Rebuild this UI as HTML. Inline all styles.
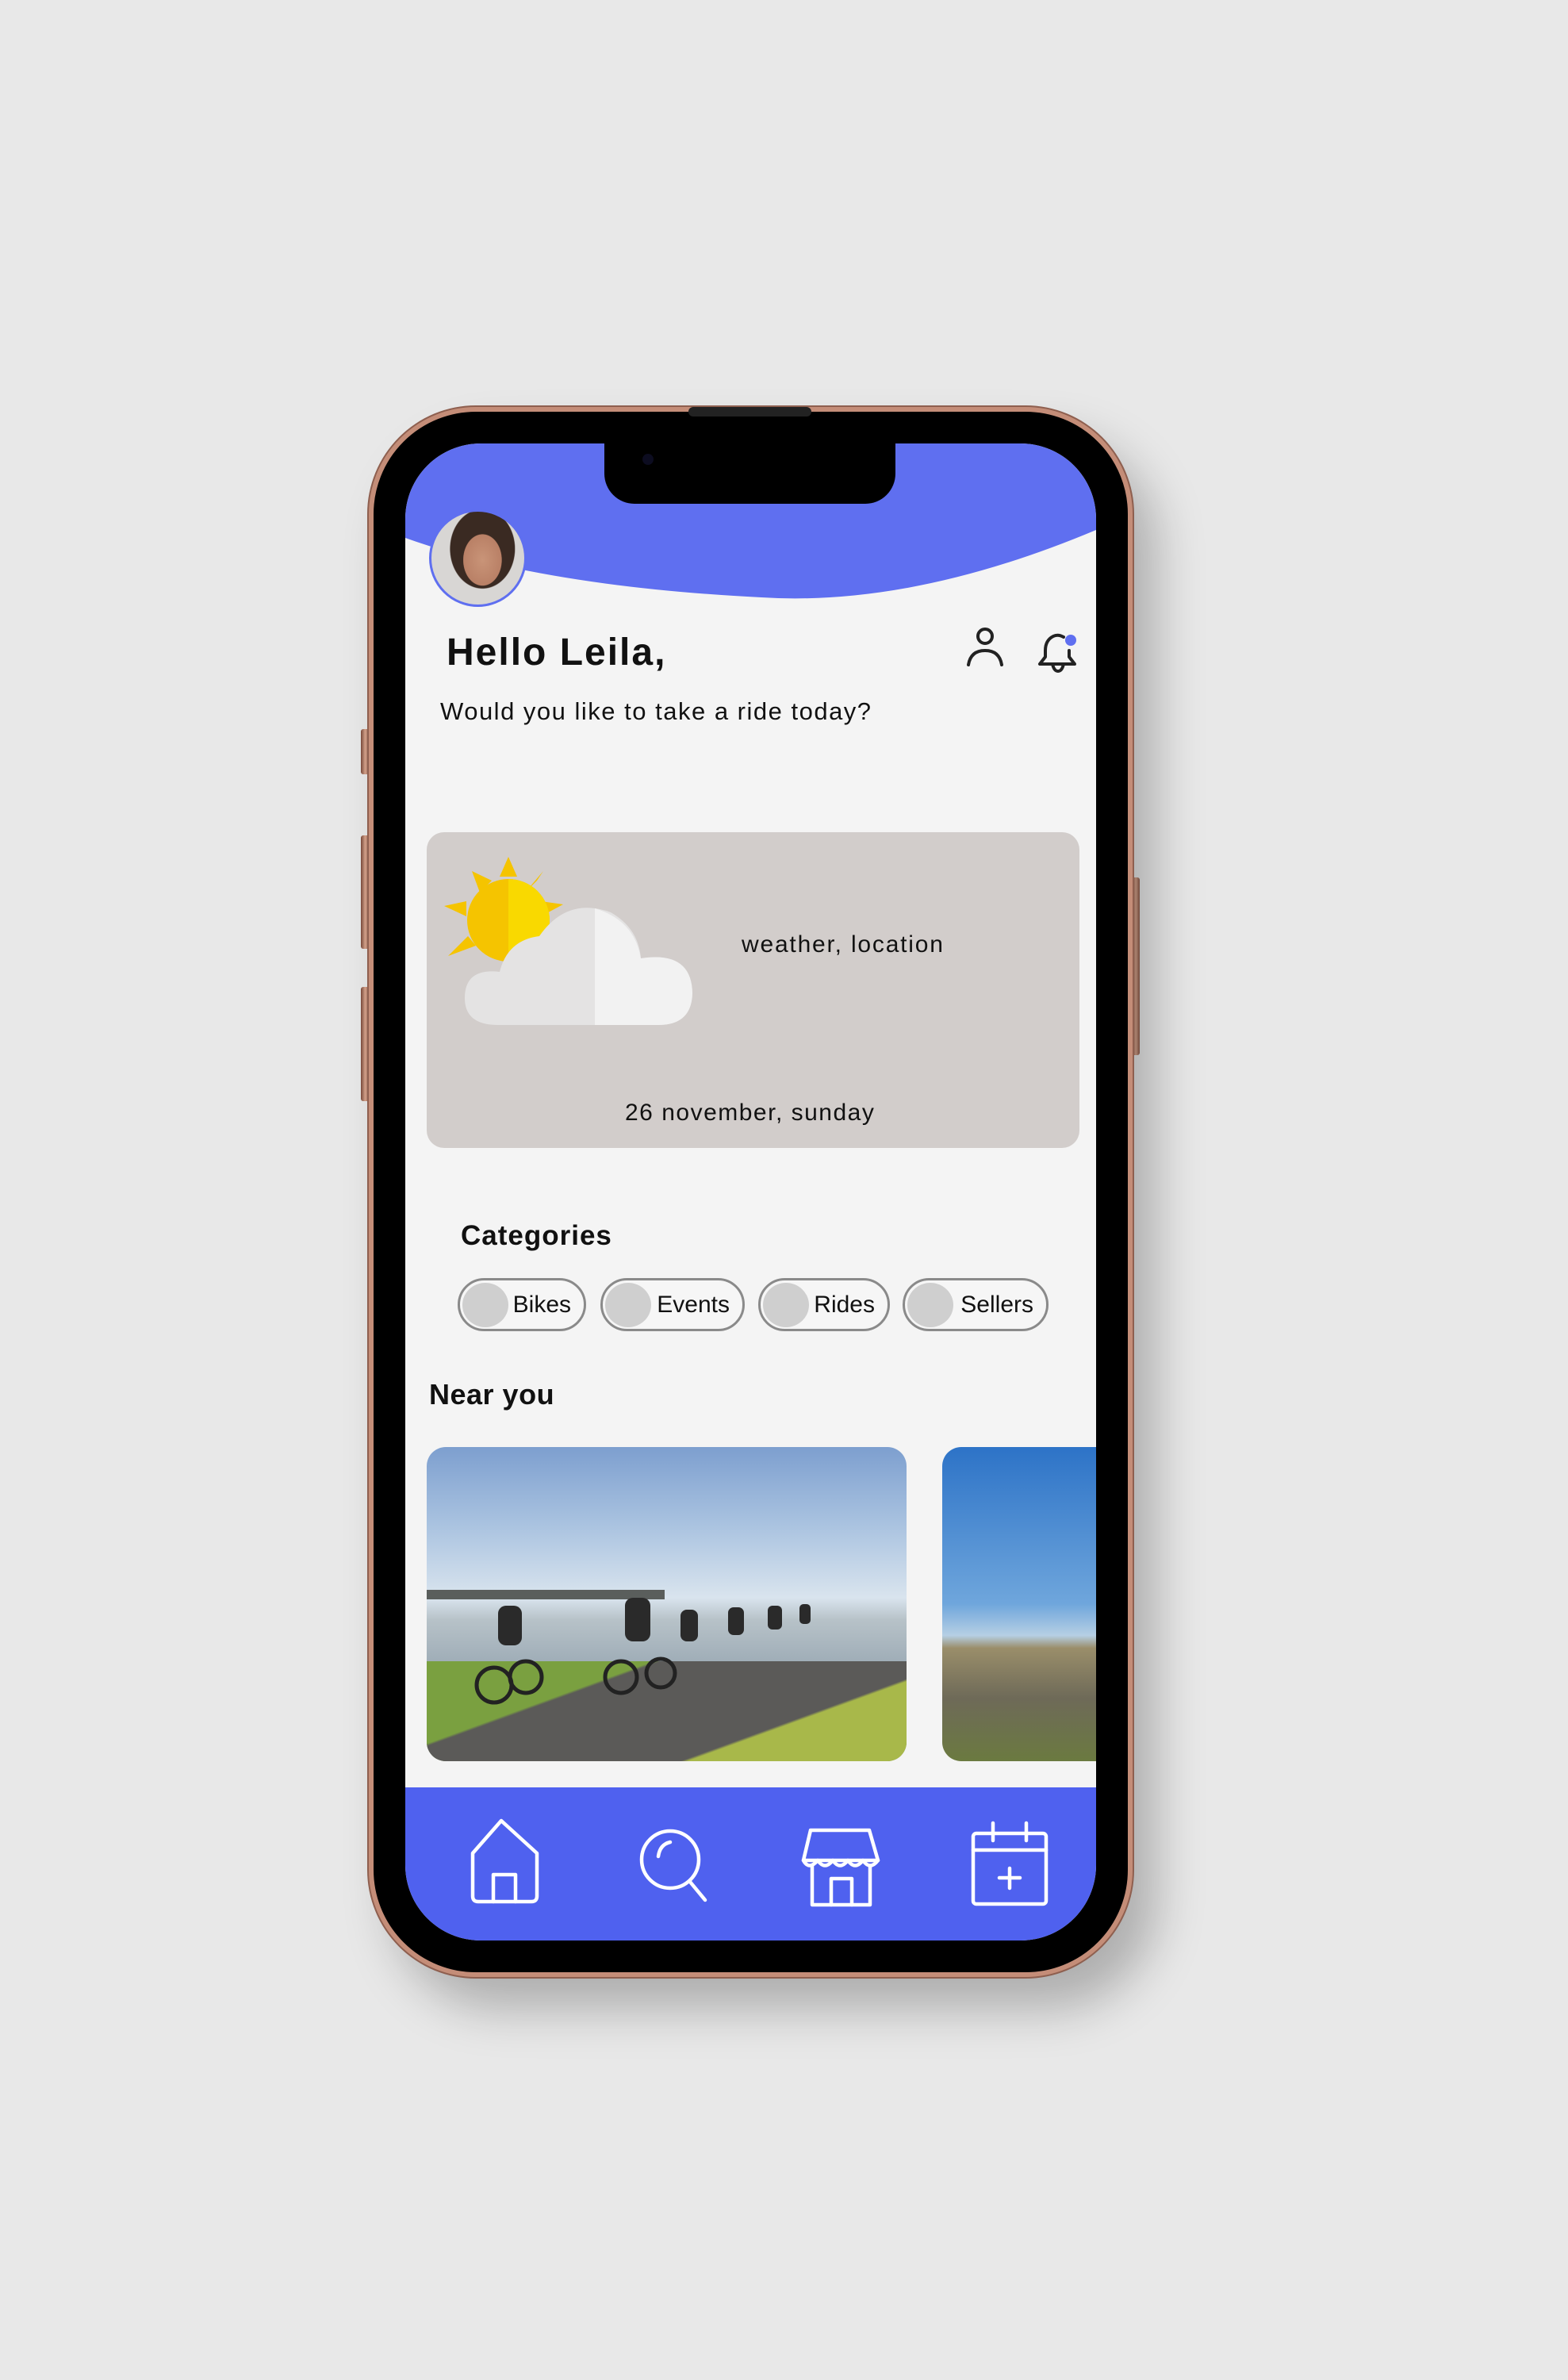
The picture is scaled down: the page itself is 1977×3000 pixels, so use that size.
<!DOCTYPE html>
<html><head><meta charset="utf-8"><style>
*{margin:0;padding:0;box-sizing:border-box}
body{width:1977px;height:3000px;background:#e8e8e8;position:relative;overflow:hidden;font-family:"Liberation Sans",sans-serif}
.abs{position:absolute}
.btn{position:absolute;background:linear-gradient(90deg,#7a4a3a,#d9a58e,#8a5a48);border-radius:3px}
.phone{left:465px;top:513px;width:963px;height:1979px;border-radius:135px;background:#000;border:6px solid #c48d78;box-shadow:0 0 0 2px #8e5f4f,30px 40px 60px rgba(0,0,0,.25)}
.screen{left:511px;top:559px;width:871px;height:1887px;border-radius:95px;background:#f4f4f4;overflow:hidden}
.chip{position:absolute;top:1611px;height:67px;border:3px solid #8a8a8a;border-radius:34px;background:#f6f6f6;font-size:30px;color:#111}
.chip i{position:absolute;left:3px;top:3px;width:58px;height:56px;border-radius:50%;background:#cfcfcf}
.chip span{position:absolute;right:16px;top:14px}
</style></head><body>
<div class="btn" style="left:455px;top:919px;width:11px;height:57px"></div>
<div class="btn" style="left:455px;top:1053px;width:11px;height:143px"></div>
<div class="btn" style="left:455px;top:1244px;width:11px;height:144px"></div>
<div class="btn" style="left:1427px;top:1106px;width:10px;height:224px"></div>
<div class="abs phone"></div>
<div class="abs screen">
 <svg class="abs" style="left:0;top:0" width="871" height="200" viewBox="0 0 871 200"><path d="M0 0H871V109Q640 206 449 194Q170 180 0 119Z" fill="#5f6ff0"/></svg>
 <div class="abs" style="left:0;top:1694px;width:871px;height:193px;background:#4f61ef"></div>
</div>
<div class="abs" style="left:762px;top:553px;width:367px;height:82px;background:#000;border-radius:0 0 38px 38px"></div>
<div class="abs" style="left:868px;top:513px;width:155px;height:12px;background:#222;border-radius:6px"></div>
<div class="abs" style="left:810px;top:572px;width:14px;height:14px;border-radius:50%;background:#0c0c20"></div>
<div class="abs" style="left:541px;top:642px;width:123px;height:123px;border-radius:50%;border:3px solid #5f6ff0;background:radial-gradient(ellipse 30px 40px at 55% 52%,#c99478 0,#b98066 80%,transparent 82%),radial-gradient(ellipse 45px 55px at 55% 40%,#3a2a22 0,#3a2a22 90%,transparent 92%),#d8d6d4;overflow:hidden"></div>
<div class="abs" style="left:563px;top:795px;font-size:48px;font-weight:bold;color:#111;letter-spacing:2px">Hello Leila,</div>
<div class="abs" style="left:555px;top:879px;font-size:31px;color:#111;letter-spacing:1.5px">Would you like to take a ride today?</div>
<svg class="abs" style="left:1216px;top:790px" width="52" height="52" viewBox="0 0 52 52" fill="none" stroke="#222" stroke-width="4" stroke-linecap="round"><circle cx="26" cy="12" r="9"/><path d="M5 48Q8 30 26 30Q44 30 47 48"/></svg>
<svg class="abs" style="left:1305px;top:794px" width="58" height="58" viewBox="0 0 58 58" fill="none" stroke="#222" stroke-width="4" stroke-linecap="round" stroke-linejoin="round"><path d="M36 9Q29 5 23 8Q13 13 13 26V34L6 43H50L43 34V26"/><path d="M22 43Q24 52 29 52Q34 52 36 43"/><circle cx="45" cy="13" r="7" fill="#5f6ff0" stroke="none"/></svg>
<div class="abs" style="left:538px;top:1049px;width:823px;height:398px;border-radius:22px;background:#d2cdcb"></div>
<svg class="abs" style="left:560px;top:1080px" width="320" height="220" viewBox="0 0 320 220">
 <g fill="#f5c400"><polygon points="81,0 92,25 70,25"/><polygon points="35,18 60,30 45,45"/><polygon points="125,18 102,45 117,30"/><polygon points="0,62 28,56 28,75"/><polygon points="150,60 122,75 122,56"/><polygon points="5,125 30,100 40,112"/></g>
 <circle cx="81" cy="80" r="52" fill="#f5c400"/><path d="M81 28A52 52 0 0 1 81 132Z" fill="#f9d900"/>
 <path d="M68 212Q26 212 26 178Q26 140 70 145Q80 105 120 100Q155 50 210 70Q245 90 248 128Q312 118 313 172Q312 212 270 212Z" fill="#e4e3e3"/>
 <path d="M190 65Q240 80 248 128Q312 118 313 172Q312 212 270 212H190Z" fill="#f2f2f2"/>
</svg>
<div class="abs" style="left:935px;top:1174px;font-size:30px;color:#111;letter-spacing:1.8px">weather, location</div>
<div class="abs" style="left:788px;top:1386px;font-size:30px;color:#111;letter-spacing:1.5px">26 november, sunday</div>
<div class="abs" style="left:581px;top:1538px;font-size:35px;font-weight:bold;color:#111;letter-spacing:1px">Categories</div>
<div class="chip" style="left:577px;width:162px"><i></i><span>Bikes</span></div>
<div class="chip" style="left:757px;width:182px"><i></i><span>Events</span></div>
<div class="chip" style="left:956px;width:166px"><i></i><span>Rides</span></div>
<div class="chip" style="left:1138px;width:184px"><i></i><span>Sellers</span></div>
<div class="abs" style="left:541px;top:1737px;font-size:36px;font-weight:bold;color:#111;letter-spacing:0.5px">Near you</div>
<div class="abs" style="left:538px;top:1824px;width:605px;height:396px;border-radius:24px;overflow:hidden;background:linear-gradient(180deg,#7d9fcf 0%,#aac3e0 25%,#d9e4ee 48%,#b7c2c8 55%,#a0aeb8 68%,#8d9a86 76%,#6e7a56 86%,#6d8a3a 100%)">
 <div class="abs" style="left:0;top:180px;width:300px;height:12px;background:#5a5e5c"></div>
 <div class="abs" style="left:0;top:270px;width:605px;height:126px;background:linear-gradient(160deg,#7aa040 0 30%,#5b5a58 31% 70%,#a8b84a 71%)"></div>
 <svg class="abs" style="left:0;top:180px" width="605" height="216"><g fill="#2a2a2a"><rect x="90" y="20" width="30" height="50" rx="10"/><rect x="250" y="10" width="32" height="55" rx="10"/><rect x="320" y="25" width="22" height="40" rx="8"/><rect x="380" y="22" width="20" height="35" rx="7"/><rect x="430" y="20" width="18" height="30" rx="6"/><rect x="470" y="18" width="14" height="25" rx="5"/></g><g fill="none" stroke="#222" stroke-width="5"><circle cx="85" cy="120" r="22"/><circle cx="125" cy="110" r="20"/><circle cx="245" cy="110" r="20"/><circle cx="295" cy="105" r="18"/></g></svg>
</div>
<div class="abs" style="left:1188px;top:1824px;width:194px;height:396px;border-radius:24px 0 0 24px;overflow:hidden;background:linear-gradient(180deg,#2d73c7 0%,#6fa6dc 50%,#b6cfe4 60%,#9a8e6a 64%,#6e6a58 80%,#6b7a40 100%)"></div>
<svg class="abs" style="left:560px;top:2290px" width="860" height="130" viewBox="560 2290 860 130" fill="none" stroke="#fff" stroke-width="4.5" stroke-linecap="round" stroke-linejoin="round">
 <path d="M596 2336L632 2295L677 2336V2390Q677 2397 670 2397H603Q596 2397 596 2390Z"/><path d="M622 2397V2363H650V2397"/>
 <circle cx="845" cy="2344" r="36"/><path d="M830 2340Q832 2325 845 2322"/><path d="M870 2372L889 2395"/>
 <path d="M1022 2307H1096L1107 2345H1013Z"/><path d="M1013 2345Q1020 2358 1031 2345Q1040 2358 1050 2345Q1059 2358 1069 2345Q1078 2358 1088 2345Q1097 2358 1107 2345"/><path d="M1024 2352V2401H1097V2352"/><path d="M1048 2401V2368H1074V2401"/>
 <rect x="1227" y="2311" width="92" height="89" rx="4"/><path d="M1227 2332H1319"/><path d="M1252 2298V2320M1294 2298V2320"/><path d="M1273 2355V2380M1260 2367H1286"/>
</svg>
</body></html>
